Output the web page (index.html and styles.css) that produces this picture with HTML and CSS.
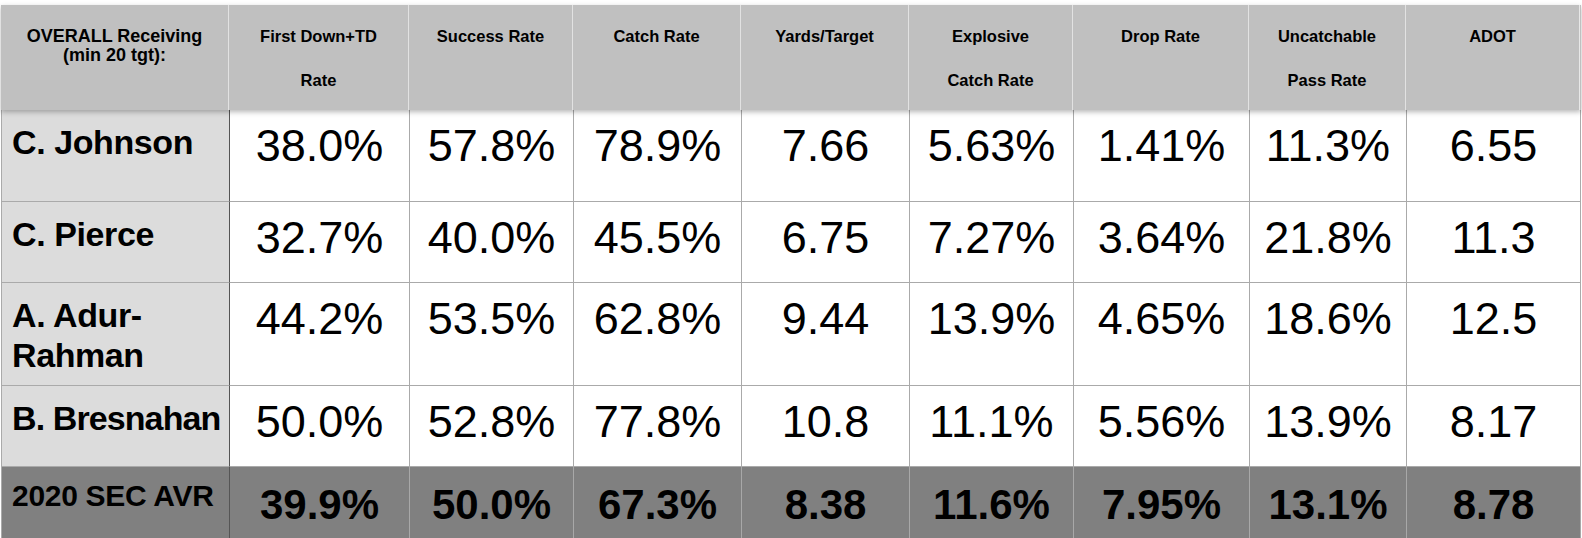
FILE: index.html
```html
<!DOCTYPE html>
<html lang="en">
<head>
<meta charset="utf-8">
<title>OVERALL Receiving</title>
<link rel="stylesheet" href="styles.css">
</head>
<body>
<div class="sheet">
  <div class="row head">
    <div class="cell hlabel">OVERALL Receiving<br>(min 20 tgt):</div>
    <div class="cell">First Down+TD<br>Rate</div>
    <div class="cell">Success Rate</div>
    <div class="cell">Catch Rate</div>
    <div class="cell">Yards/Target</div>
    <div class="cell">Explosive<br>Catch Rate</div>
    <div class="cell">Drop Rate</div>
    <div class="cell">Uncatchable<br>Pass Rate</div>
    <div class="cell">ADOT</div>
  </div>
  <div class="row body r1">
    <div class="cell name">C. Johnson</div>
    <div class="cell num">38.0%</div>
    <div class="cell num">57.8%</div>
    <div class="cell num">78.9%</div>
    <div class="cell num">7.66</div>
    <div class="cell num">5.63%</div>
    <div class="cell num">1.41%</div>
    <div class="cell num">11.3%</div>
    <div class="cell num">6.55</div>
  </div>
  <div class="row body r2">
    <div class="cell name">C. Pierce</div>
    <div class="cell num">32.7%</div>
    <div class="cell num">40.0%</div>
    <div class="cell num">45.5%</div>
    <div class="cell num">6.75</div>
    <div class="cell num">7.27%</div>
    <div class="cell num">3.64%</div>
    <div class="cell num">21.8%</div>
    <div class="cell num">11.3</div>
  </div>
  <div class="row body r3">
    <div class="cell name">A. Adur-Rahman</div>
    <div class="cell num">44.2%</div>
    <div class="cell num">53.5%</div>
    <div class="cell num">62.8%</div>
    <div class="cell num">9.44</div>
    <div class="cell num">13.9%</div>
    <div class="cell num">4.65%</div>
    <div class="cell num">18.6%</div>
    <div class="cell num">12.5</div>
  </div>
  <div class="row body r4">
    <div class="cell name nowrap">B. Bresnahan</div>
    <div class="cell num">50.0%</div>
    <div class="cell num">52.8%</div>
    <div class="cell num">77.8%</div>
    <div class="cell num">10.8</div>
    <div class="cell num">11.1%</div>
    <div class="cell num">5.56%</div>
    <div class="cell num">13.9%</div>
    <div class="cell num">8.17</div>
  </div>
  <div class="row foot">
    <div class="cell flabel">2020 SEC AVR</div>
    <div class="cell fnum">39.9%</div>
    <div class="cell fnum">50.0%</div>
    <div class="cell fnum">67.3%</div>
    <div class="cell fnum">8.38</div>
    <div class="cell fnum">11.6%</div>
    <div class="cell fnum">7.95%</div>
    <div class="cell fnum">13.1%</div>
    <div class="cell fnum">8.78</div>
  </div>
</div>
</body>
</html>
```

FILE: styles.css
```css
html, body {
  margin: 0;
  padding: 0;
  background: #ffffff;
  overflow: hidden;
}

body {
  font-family: "Liberation Sans", Arial, Helvetica, sans-serif;
  color: #000000;
}

.sheet {
  margin: 5px 0 0 1px;
  width: 1580px;
  display: flex;
  flex-direction: column;
}

.row {
  display: grid;
  grid-template-columns: 228px 180px 164px 168px 168px 164px 176px 157px 174px;
  box-sizing: border-box;
}

.cell {
  box-sizing: border-box;
  text-align: center;
  overflow: hidden;
}

/* Header */
.head {
  height: 105px;
  background: #c0c0c0;
  position: relative;
  z-index: 1;
  box-shadow: 0 2px 5px rgba(0, 0, 0, 0.28);
}

.head .cell {
  border-right: 1px solid #e2e2e2;
  font-weight: bold;
  font-size: 16.5px;
  line-height: 44px;
  padding-top: 9px;
}

.head .cell:last-child {
  border-right: 1px solid #e8e8e8;
}

.head .hlabel {
  font-size: 18px;
  line-height: 19px;
  padding-top: 22px;
}

/* Body rows */
.body {
  border-left: 1px solid #aaaaaa;
  background: #ffffff;
}

.body .cell {
  border-right: 1px solid #aaaaaa;
  border-bottom: 1px solid #aaaaaa;
}

.r1 { height: 92px; }
.r2 { height: 81px; }
.r3 { height: 103px; }
.r4 { height: 81px; }

.name {
  background: #dcdcdc;
  text-align: left;
  padding: 12px 0 0 10px;
  font-weight: bold;
  font-size: 34px;
  line-height: 40px;
  letter-spacing: -0.4px;
}

.nowrap {
  white-space: nowrap;
  letter-spacing: -0.9px;
}

.body .name {
  border-right: 1px solid #555555;
}

.num {
  font-size: 45px;
  line-height: 1;
  padding-top: 13px;
}

/* Footer */
.foot {
  height: 71px;
  background: #808080;
  border-left: 1px solid #aaaaaa;
}

.foot .cell {
  border-right: 1px solid #a8a8a8;
}

.foot .flabel {
  border-right: 1px solid #555555;
  text-align: left;
  padding: 14px 0 0 10px;
  font-weight: bold;
  font-size: 30px;
  line-height: 1;
  letter-spacing: -0.3px;
  white-space: nowrap;
}

.fnum {
  font-weight: bold;
  font-size: 42px;
  line-height: 1;
  padding-top: 17px;
}
```
